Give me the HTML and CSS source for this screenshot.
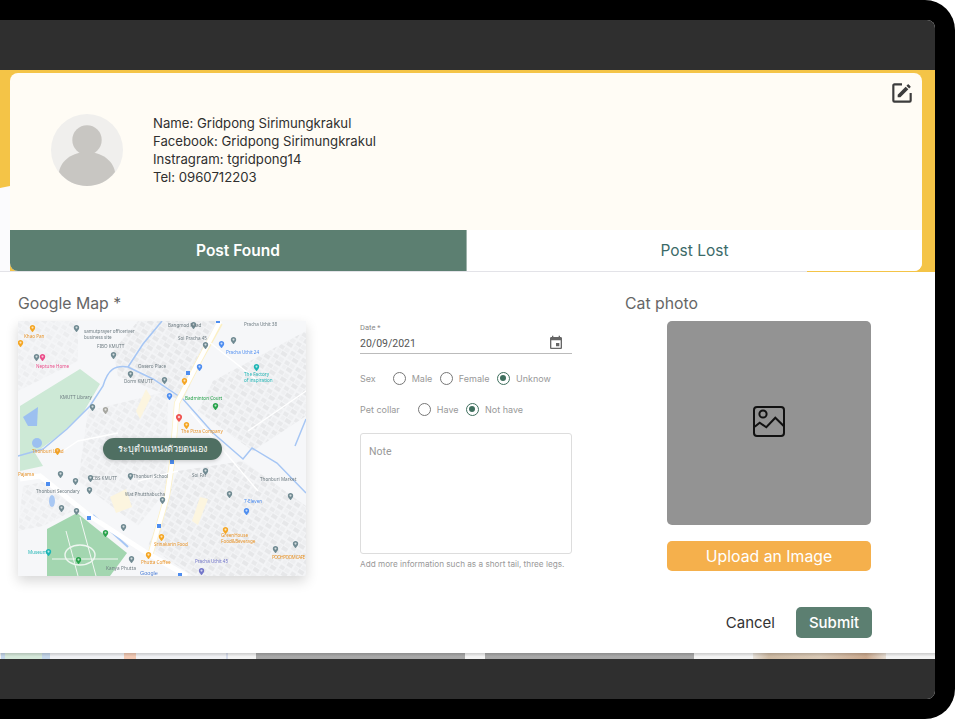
FILE: index.html
```html
<!DOCTYPE html>
<html lang="en">
<head>
    <meta charset="UTF-8">
    <meta name="viewport" content="width=device-width, initial-scale=1.0">
    <title>Post Found</title>
    <link rel="stylesheet" href="styles.css">
</head>
<body>
    <div class="device">
        <div class="screen">
            <div class="top-bar"></div>

            <section class="hero">
                <div class="profile-card">
                    <div class="profile">
                        <svg class="avatar" viewBox="0 0 72 72">
                            <circle cx="36" cy="36" r="36" fill="#f0efed"/>
                            <circle cx="36" cy="26" r="14.7" fill="#c8c6c2"/>
                            <path d="M8 58C10 46 22 38 36 38S62 46 64 58C57 67 47 72 36 72S15 67 8 58Z" fill="#c8c6c2"/>
                        </svg>
                        <div class="info">
                            <div>Name: Gridpong Sirimungkrakul</div>
                            <div>Facebook: Gridpong Sirimungkrakul</div>
                            <div>Instragram: tgridpong14</div>
                            <div>Tel: 0960712203</div>
                        </div>
                    </div>
                    <svg class="edit-icon" viewBox="0 0 24 24">
                        <path d="M5,3C3.89,3 3,3.89 3,5V19A2,2 0 0,0 5,21H19A2,2 0 0,0 21,19V12H19V19H5V5H12V3H5M17.78,4C17.61,4 17.43,4.07 17.3,4.2L16.08,5.41L18.58,7.91L19.8,6.7C20.06,6.44 20.06,6 19.8,5.75L18.25,4.2C18.12,4.07 17.95,4 17.78,4M15.37,6.12L8,13.5V16H10.5L17.87,8.62L15.37,6.12Z"/>
                    </svg>
                    <div class="tabs">
                        <div class="tab tab-active">Post Found</div>
                        <div class="tab">Post Lost</div>
                    </div>
                </div>
            </section>

            <main class="form">
                <div class="map-col">
                    <div class="section-title">Google Map *</div>
                    <div class="map">
                        <svg class="map-svg" viewBox="0 0 288 255">
                            <defs>
                                <pattern id="blocks" width="13" height="11" patternUnits="userSpaceOnUse" patternTransform="rotate(32)">
                                    <rect width="13" height="11" fill="#f3f4f6"/>
                                    <rect x="1" y="1" width="5" height="4" fill="#e8e9eb"/>
                                    <rect x="7" y="1" width="5" height="4" fill="#edeef0"/>
                                    <rect x="1" y="6" width="4" height="4" fill="#eeeff1"/>
                                    <rect x="6" y="6" width="6" height="4" fill="#e6e7e9"/>
                                </pattern>
                                <filter id="soft"><feGaussianBlur stdDeviation="0.55"/></filter>
                                <symbol id="pin" viewBox="-1.5 -1 13 15" overflow="visible">
                                    <path d="M5 0C2.2 0 0 2.2 0 4.9 0 8.3 5 13 5 13S10 8.3 10 4.9C10 2.2 7.8 0 5 0Z"/>
                                    <circle cx="5" cy="4.8" r="2" fill="#fff" fill-opacity=".7"/>
                                </symbol>
                            </defs>
                            <g filter="url(#soft)">
                                <rect width="288" height="255" fill="#f6f7f9"/>
                                <!-- built up areas -->
                                <path d="M120 0H200L165 80 100 55 95 30Z" fill="url(#blocks)"/>
                                <path d="M195 60L288 10V95L235 130 180 90Z" fill="url(#blocks)"/>
                                <path d="M0 0H60V40L0 70Z" fill="url(#blocks)" opacity=".6"/>
                                <path d="M70 90L150 70 148 170 120 205 60 160Z" fill="url(#blocks)" opacity=".75"/>
                                <path d="M160 150L225 140 288 185V255H175L130 225Z" fill="url(#blocks)"/>
                                <path d="M5 165L30 160 75 195 55 190 25 205 0 210Z" fill="url(#blocks)" opacity=".6"/>
                                <path d="M128 68L133 76 122 98 118 90ZM92 176L108 168 114 186 98 192ZM182 176L190 178 180 204 174 200Z" fill="#fcf5df"/>
                                <!-- parks -->
                                <path d="M2 85L62 48 82 63 65 92 44 112 17 132 25 145 2 150Z" fill="#cde9d6"/>
                                <path d="M29 208L59 192 109 232 92 255H29Z" fill="#a3d6b0"/>
                                <path d="M34 238L100 238M48 210L60 255M62 196L78 255" fill="none" stroke="#f2f7f3" stroke-width="1"/>
                                <ellipse cx="62" cy="234" rx="15" ry="10" fill="none" stroke="#eef6f0" stroke-width="1.4"/>
                                <!-- water -->
                                <path d="M5 96L20 86 19 105 10 105Z" fill="#9cc0f0"/>
                                <ellipse cx="19" cy="122" rx="5" ry="5" fill="#9cc0f0"/>
                                <ellipse cx="34" cy="180" rx="3" ry="6" fill="#a9c8f3"/>
                                <path d="M0 135L25 128 49 108 72 85 85 65C90 48 97 44 110 46L135 58 165 78 195 112 225 138 234 127 259 142 288 172M110 46L125 23 144 0M288 98L277 125" fill="none" stroke="#a6c6f4" stroke-width="1.5"/>
                                <path d="M75 194L110 226" stroke="#a6c6f4" stroke-width="2"/>
                                <!-- roads -->
                                <path d="M202 2L182 38 159 82 154 142 149 175 132 235" fill="none" stroke="#fcf0c4" stroke-width="6"/>
                                <path d="M202 0L182 38 159 82 154 142 149 175 132 235" fill="none" stroke="#fff" stroke-width="4.5"/>
                                <path d="M2 158L22 155 72 195 129 232 169 255" fill="none" stroke="#fff" stroke-width="5"/>
                                <path d="M45 130L60 120 100 112M172 90L240 170M190 20L240 60M230 110L288 70M160 150L120 160" fill="none" stroke="#fff" stroke-width="1.4"/>
                                <!-- pins -->
                                <g fill="#f5a623">
                                    <use href="#pin" x="11" y="3" width="7" height="9"/>
                                    <use href="#pin" x="-1" y="18" width="7" height="9"/>
                                    <use href="#pin" x="36" y="126" width="7" height="9"/>
                                    <use href="#pin" x="163" y="56" width="7" height="9"/>
                                    <use href="#pin" x="165" y="100" width="7" height="9"/>
                                    <use href="#pin" x="140" y="212" width="7" height="9"/>
                                    <use href="#pin" x="204" y="205" width="7" height="9"/>
                                    <use href="#pin" x="127" y="230" width="7" height="9"/>
                                </g>
                                <g fill="#6f8a92">
                                    <use href="#pin" x="55" y="3" width="7" height="9"/>
                                    <use href="#pin" x="92" y="30" width="7" height="9"/>
                                    <use href="#pin" x="15" y="32" width="7" height="9"/>
                                    <use href="#pin" x="109" y="49" width="7" height="9"/>
                                    <use href="#pin" x="143" y="55" width="7" height="9"/>
                                    <use href="#pin" x="71" y="82" width="7" height="9"/>
                                    <use href="#pin" x="39" y="149" width="7" height="9"/>
                                    <use href="#pin" x="54" y="156" width="7" height="9"/>
                                    <use href="#pin" x="69" y="153" width="7" height="9"/>
                                    <use href="#pin" x="68" y="165" width="7" height="9"/>
                                    <use href="#pin" x="109" y="151" width="7" height="9"/>
                                    <use href="#pin" x="40" y="183" width="7" height="9"/>
                                    <use href="#pin" x="55" y="186" width="7" height="9"/>
                                    <use href="#pin" x="102" y="202" width="7" height="9"/>
                                    <use href="#pin" x="110" y="234" width="7" height="9"/>
                                    <use href="#pin" x="141" y="175" width="7" height="9"/>
                                    <use href="#pin" x="184" y="146" width="7" height="9"/>
                                    <use href="#pin" x="208" y="169" width="7" height="9"/>
                                    <use href="#pin" x="269" y="171" width="7" height="9"/>
                                    <use href="#pin" x="274" y="219" width="7" height="9"/>
                                    <use href="#pin" x="254" y="224" width="7" height="9"/>
                                    <use href="#pin" x="172" y="0" width="7" height="9"/>
                                    <use href="#pin" x="184" y="20" width="7" height="9"/>
                                    <use href="#pin" x="212" y="15" width="7" height="9"/>
                                    <use href="#pin" x="191" y="118" width="7" height="9"/>
                                </g>
                                <use href="#pin" x="84" y="85" width="7" height="9" fill="#a6a6a0"/>
                                <use href="#pin" x="21" y="32" width="7" height="9" fill="#ea4c89"/>
                                <g fill="#4d8df0">
                                    <use href="#pin" x="200" y="19" width="7" height="9"/>
                                    <use href="#pin" x="178" y="42" width="7" height="9"/>
                                    <use href="#pin" x="148" y="71" width="7" height="9"/>
                                    <use href="#pin" x="225" y="186" width="7" height="9"/>
                                </g>
                                <g fill="#1fb5b5">
                                    <use href="#pin" x="235" y="42" width="7" height="9"/>
                                    <use href="#pin" x="27" y="227" width="7" height="9"/>
                                </g>
                                <g fill="#27a24b">
                                    <use href="#pin" x="194" y="81" width="7" height="9"/>
                                    <use href="#pin" x="84" y="208" width="7" height="9"/>
                                    <use href="#pin" x="57" y="235" width="7" height="9"/>
                                </g>
                                <use href="#pin" x="157" y="92" width="8" height="10" fill="#ef5350"/>
                                <use href="#pin" x="180" y="246" width="7" height="9" fill="#7275c9"/>
                                <g fill="#4d8df0">
                                    <rect x="168" y="50" width="4" height="4"/>
                                    <rect x="152" y="139" width="4" height="4"/>
                                    <rect x="28" y="161" width="4" height="4"/>
                                    <rect x="69" y="195" width="4" height="4"/>
                                    <rect x="139" y="203" width="4" height="4"/>
                                    <rect x="160" y="252" width="4" height="3"/>
                                    <rect x="198" y="0" width="4" height="2"/>
                                </g>
                                <!-- labels -->
                                <g class="map-labels">
                                    <text x="6" y="17" fill="#e8942a">Khao Pan</text>
                                    <text x="66" y="12" fill="#6c7a80">samutprayer officeriver</text>
                                    <text x="66" y="18" fill="#6c7a80">business site</text>
                                    <text x="79" y="27" fill="#6c7a80">FIBO KMUTT</text>
                                    <text x="18" y="47" fill="#ea4c89">Neptune Home</text>
                                    <text x="120" y="47" fill="#6c7a80">Oasero Place</text>
                                    <text x="106" y="62" fill="#6c7a80">Dorm KMUTT</text>
                                    <text x="150" y="6" fill="#6c7a80">Bangmod Road</text>
                                    <text x="160" y="19" fill="#6c7a80">Soi Pracha 45</text>
                                    <text x="226" y="5" fill="#6c7a80">Pracha Uthit 38</text>
                                    <text x="208" y="33" fill="#4d8df0">Pracha Uthit 24</text>
                                    <text x="226" y="55" fill="#1fb5b5">The Factory</text>
                                    <text x="226" y="61" fill="#1fb5b5">of inspiration</text>
                                    <text x="167" y="79" fill="#27a24b">Badminton Court</text>
                                    <text x="42" y="78" fill="#6c7a80">KMUTT Library</text>
                                    <text x="163" y="112" fill="#e8942a">The Pizza Company</text>
                                    <text x="14" y="132" fill="#e8942a">Thonburi Land</text>
                                    <text x="0" y="155" fill="#e8942a">Pajama</text>
                                    <text x="74" y="159" fill="#6c7a80">CBS KMUTT</text>
                                    <text x="115" y="157" fill="#6c7a80">Thonburi School</text>
                                    <text x="174" y="156" fill="#6c7a80">Soi Fai</text>
                                    <text x="242" y="160" fill="#6c7a80">Thonburi Market</text>
                                    <text x="226" y="182" fill="#4d8df0">7-Eleven</text>
                                    <text x="18" y="172" fill="#6c7a80">Thonburi Secondary</text>
                                    <text x="107" y="175" fill="#6c7a80">Wat Phutthabucha</text>
                                    <text x="203" y="216" fill="#e8942a">GreenHouse</text>
                                    <text x="203" y="222" fill="#e8942a">Food&amp;Beverage</text>
                                    <text x="136" y="225" fill="#e8942a">Srinakarin Food</text>
                                    <text x="254" y="238" fill="#e8942a" textLength="33">POOHPOOM CAFE</text>
                                    <text x="123" y="243" fill="#e8942a">Phutta Coffee</text>
                                    <text x="10" y="233" fill="#1fb5b5">Museum</text>
                                    <text x="88" y="249" fill="#6c7a80" textLength="30">Kanya Phutta</text>
                                    <text x="177" y="242" fill="#7275c9">Pracha Uthit 45</text>
                                </g>
                                <text class="map-google" x="122" y="254">Google</text>
                            </g>
                        </svg>
                        <div class="map-button">ระบุตำแหน่งด้วยตนเอง</div>
                    </div>
                </div>

                <div class="fields-col">
                    <div class="date-field">
                        <div class="date-label">Date *</div>
                        <div class="date-value">
                            <span>20/09/2021</span>
                            <svg class="calendar-icon" viewBox="0 0 24 24">
                                <path d="M17 12h-5v5h5v-5zM16 1v2H8V1H6v2H5c-1.11 0-1.99.9-1.99 2L3 19c0 1.1.89 2 2 2h14c1.1 0 2-.9 2-2V5c0-1.1-.9-2-2-2h-1V1h-2zm3 18H5V8h14v11z"/>
                            </svg>
                        </div>
                    </div>

                    <div class="radio-row radio-row-sex">
                        <span class="radio-title">Sex</span>
                        <span class="radio"></span><span class="radio-label">Male</span>
                        <span class="radio"></span><span class="radio-label">Female</span>
                        <span class="radio radio-on"></span><span class="radio-label">Unknow</span>
                    </div>
                    <div class="radio-row radio-row-collar">
                        <span class="radio-title">Pet collar</span>
                        <span class="radio"></span><span class="radio-label">Have</span>
                        <span class="radio radio-on"></span><span class="radio-label">Not have</span>
                    </div>

                    <div class="note-box">Note</div>
                    <div class="helper">Add more information such as a short tail, three legs.</div>
                </div>

                <div class="photo-col">
                    <div class="section-title section-title-photo">Cat photo</div>
                    <div class="photo-box">
                        <svg class="photo-icon" viewBox="0 0 32 31">
                            <rect x="1" y="1" width="30" height="29" rx="3"/>
                            <circle cx="10" cy="8" r="3.6"/>
                            <path d="M1.7 20.7L6.7 16.7 13.3 21.3 22.3 11.7 30.7 20"/>
                        </svg>
                    </div>
                    <div class="upload-btn">Upload an Image</div>
                </div>

                <div class="actions">
                    <span class="cancel-btn">Cancel</span>
                    <span class="submit-btn">Submit</span>
                </div>
            </main>

            <div class="strip">
                <div class="strip-map"></div>
                <div class="strip-gray"></div>
                <div class="strip-gray strip-gray-2"></div>
                <div class="strip-photo"></div>
            </div>

            <div class="bottom-bar"></div>
        </div>
    </div>
</body>
</html>
```

FILE: styles.css
```css
/* Page frame */
html, body {
    margin: 0;
    padding: 0;
    background-color: #fff;
}

body {
    font-family: Inter, "Noto Sans", sans-serif;
    overflow: hidden;
}

.device {
    width: 955px;
    height: 719px;
    box-sizing: border-box;
    padding: 20px 20px 20px 0;
    background-color: #000;
    border-radius: 0 30px 30px 0;
}

.screen {
    height: 679px;
    display: flex;
    flex-direction: column;
    background-color: #fff;
    border-radius: 0 8px 8px 0;
    overflow: hidden;
}

.top-bar {
    flex: 0 0 50px;
    background-color: #2f2f2f;
}

.bottom-bar {
    flex: 0 0 40px;
    background-color: #2f2f2f;
}

/* Yellow header with the profile card */
.hero {
    position: relative;
    flex: 0 0 202px;
    box-sizing: border-box;
    padding: 3px 13px 1px 10px;
    background-color: #f4c447;
}

.hero::before {
    content: "";
    position: absolute;
    left: 0;
    top: 116px;
    width: 10px;
    height: 86px;
    background-color: #fbfbfd;
    clip-path: polygon(0 2px, 100% 0, 100% 100%, 0 100%);
}

.hero::after {
    content: "";
    position: absolute;
    left: 0;
    bottom: 0;
    width: 807px;
    height: 1px;
    background-color: #e3e3e8;
}

.profile-card {
    position: relative;
    z-index: 1;
    height: 198px;
    display: flex;
    flex-direction: column;
    background-color: #fffcf5;
    border-radius: 8px;
    overflow: hidden;
}

.profile {
    flex: 1;
    display: flex;
    align-items: center;
    gap: 30px;
    padding: 0 0 3px 41px;
}

.avatar {
    width: 72px;
    height: 72px;
}

.info {
    padding-top: 2px;
    font-size: 13.15px;
    line-height: 17.9px;
    color: #2f2f2f;
}

.edit-icon {
    position: absolute;
    top: 7px;
    right: 7px;
    width: 26px;
    height: 26px;
    fill: #3c3c3c;
}

.tabs {
    flex: 0 0 41px;
    display: grid;
    grid-template-columns: 457px 1fr;
}

.tab {
    display: flex;
    align-items: center;
    justify-content: center;
    font-size: 15.5px;
    color: #3b6a68;
    background-color: #fff;
}

.tab-active {
    font-weight: 600;
    color: #fff;
    background-color: #5c7f71;
    border-right: 1px solid #9fb3ab;
}

/* Form area */
.form {
    position: relative;
    flex: 1;
    display: grid;
    grid-template-columns: 288px 212px 1fr;
    column-gap: 54px;
    box-sizing: border-box;
    padding: 22px 0 0 18px;
    background-color: #fff;
}

.section-title {
    height: 27px;
    padding-top: 1px;
    box-sizing: border-box;
    font-size: 15.8px;
    line-height: 18px;
    color: #666;
}

.map {
    position: relative;
    width: 288px;
    height: 255px;
    box-shadow: 0 5px 12px rgba(0, 0, 0, 0.16);
}

.map-svg {
    display: block;
    width: 288px;
    height: 255px;
}

.map-labels {
    font-family: "Noto Sans", sans-serif;
    font-size: 4.6px;
}

.map-google {
    font-family: "Liberation Sans", sans-serif;
    font-size: 5.5px;
    fill: #4d7fd6;
}

.map-button {
    position: absolute;
    left: 85px;
    top: 117px;
    width: 119px;
    height: 22px;
    display: flex;
    align-items: center;
    justify-content: center;
    font-size: 9.1px;
    color: #fff;
    background-color: #4f6f62;
    border-radius: 11px;
    box-shadow: 0 1px 4px rgba(0, 0, 0, 0.2);
}

.fields-col {
    padding-top: 29px;
}

.date-field {
    height: 30px;
    border-bottom: 1px solid #bbb;
    font-family: Roboto, sans-serif;
    color: #555;
}

.date-label {
    height: 11px;
    font-size: 7.5px;
    line-height: 10px;
    color: #888;
}

.date-value {
    display: flex;
    justify-content: space-between;
    align-items: center;
    padding-right: 8px;
    height: 18px;
    font-size: 10.5px;
}

.calendar-icon {
    width: 16px;
    height: 16px;
    fill: #666;
}

.radio-row {
    display: flex;
    align-items: center;
    font-size: 9px;
    color: #999;
}

.radio-row-sex {
    margin-top: 17px;
    height: 14px;
}

.radio-row-collar {
    margin-top: 17px;
    height: 14px;
}

.radio-title {
    margin-right: 17px;
}

.radio-row-collar .radio-title {
    margin-right: 18px;
}

.radio {
    position: relative;
    flex: 0 0 13px;
    box-sizing: border-box;
    height: 13px;
    margin-right: 6px;
    border: 1.5px solid #777;
    border-radius: 50%;
}

.radio-label {
    margin-right: 7.5px;
}

.radio-on {
    border-color: #3f6f5e;
}

.radio-on::after {
    content: "";
    position: absolute;
    left: 2px;
    top: 2px;
    width: 6px;
    height: 6px;
    background-color: #3f6f5e;
    border-radius: 50%;
}

.note-box {
    height: 121px;
    margin-top: 17px;
    box-sizing: border-box;
    padding: 11px 8px;
    font-family: Roboto, sans-serif;
    font-size: 10.5px;
    color: #999;
    border: 1px solid #ddd;
    border-radius: 3px;
}

.helper {
    margin-top: 5px;
    font-size: 8.2px;
    line-height: 10px;
    color: #999;
    white-space: nowrap;
}

.photo-col {
    margin-left: -1px;
}

.photo-box {
    width: 204px;
    height: 204px;
    margin-left: 42px;
    display: flex;
    align-items: center;
    justify-content: center;
    background-color: #939393;
    border-radius: 5px;
}

.photo-icon {
    width: 32px;
    height: 31px;
    margin-bottom: 3px;
    fill: none;
    stroke: #111;
    stroke-width: 2;
}

.upload-btn {
    width: 204px;
    height: 30px;
    margin: 16px 0 0 42px;
    display: flex;
    align-items: center;
    justify-content: center;
    font-size: 15.8px;
    color: #fff;
    background-color: #f5b04c;
    border-radius: 5px;
}

.actions {
    position: absolute;
    right: 63px;
    bottom: 15px;
    display: flex;
    align-items: center;
    gap: 21px;
}

.cancel-btn {
    font-size: 15px;
    color: #333;
}

.submit-btn {
    width: 76px;
    height: 31px;
    display: flex;
    align-items: center;
    justify-content: center;
    font-size: 15px;
    font-weight: 500;
    color: #fff;
    background-color: #5c7f71;
    border-radius: 5px;
}

/* Sliver of the page behind the dialog */
.strip {
    position: relative;
    flex: 0 0 6px;
    background-color: #f3f3f3;
    overflow: hidden;
}

.strip::after {
    content: "";
    position: absolute;
    inset: 0;
    background: linear-gradient(rgba(0, 0, 0, 0.16), rgba(0, 0, 0, 0) 60%);
}

.strip-map {
    position: absolute;
    left: 0;
    top: 0;
    width: 228px;
    height: 6px;
    background: linear-gradient(90deg, #f2f4f3 0 1px, #c4d6ea 1px 5px, #d5e8da 5px 42px, #c4d6ea 42px 50px, #f0f1f4 50px 124px, #f2c9b4 124px 136px, #f0f1f4 136px 226px, #d5dbea 226px);
}

.strip-gray {
    position: absolute;
    left: 256px;
    top: 0;
    width: 209px;
    height: 6px;
    background-color: #a8a8a8;
}

.strip-gray-2 {
    left: 485px;
}

.strip-photo {
    position: absolute;
    left: 753px;
    top: 0;
    width: 133px;
    height: 6px;
    background: linear-gradient(90deg, #e6e0d8, #cdb9a2 12%, #d9c9b6 50%, #c9a78c 85%, #e6ddd3);
}
```
